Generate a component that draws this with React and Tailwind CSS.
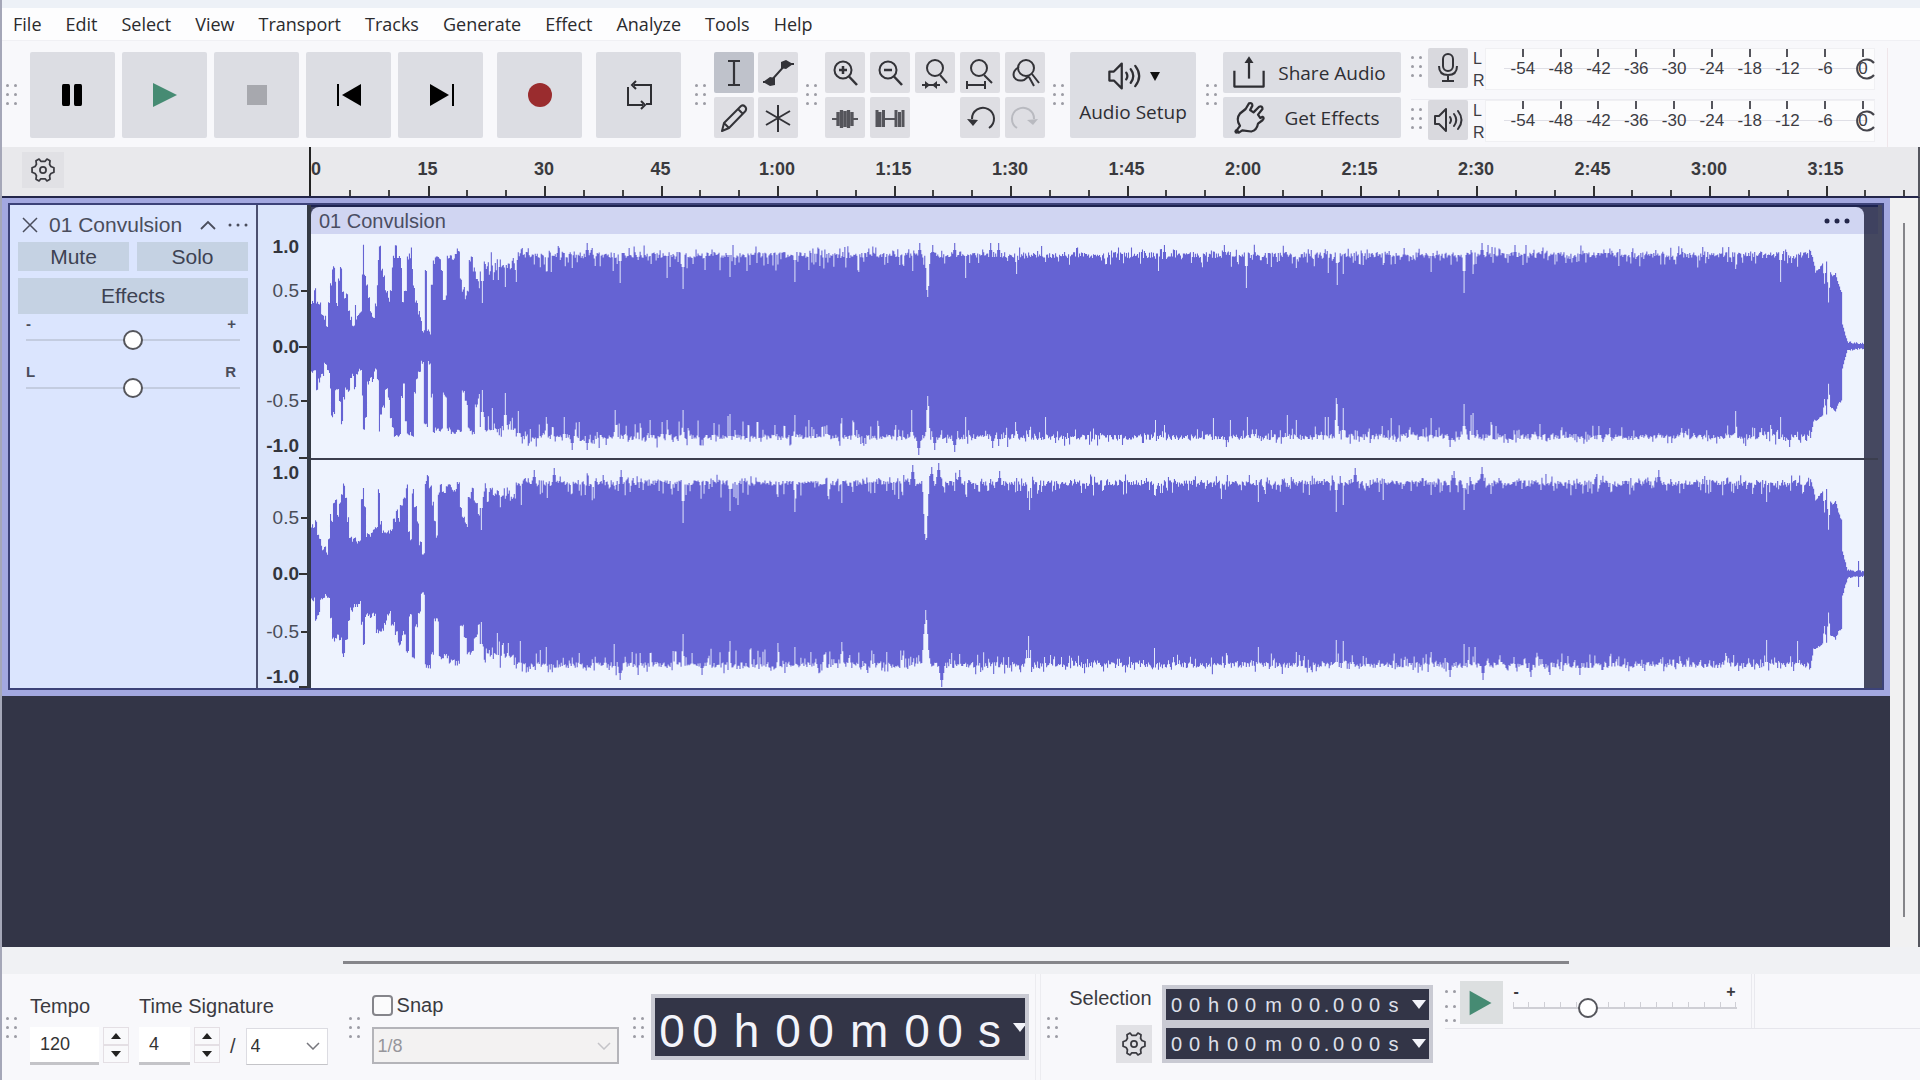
import { Fragment } from 'react';
import clsx from 'clsx';

const MENUS = ['File', 'Edit', 'Select', 'View', 'Transport', 'Tracks', 'Generate', 'Effect', 'Analyze', 'Tools', 'Help'];
const RULER = ['0', '15', '30', '45', '1:00', '1:15', '1:30', '1:45', '2:00', '2:15', '2:30', '2:45', '3:00', '3:15'];
const METER = ['-54', '-48', '-42', '-36', '-30', '-24', '-18', '-12', '-6', '0'];

const CLIP_WIDTH = 1555;
const INTRO_END = 169;
const OUTRO_START = 1501;

// The intro is drawn point by point (three units per pixel), the body is a level with dips and peaks.
const CHANNELS = [
    {
        height: 224,
        zero: 470,
        introTop: '936,340 945,300 950,340 957,340 965,375 975,385 980,410 988,340 992,285 1000,235 1005,270 1010,345 1018,270 1022,235 1028,310 1033,330 1038,310 1045,360 1052,385 1060,405 1065,345 1070,385 1078,370 1083,365 1086,260 1090,170 1094,260 1100,290 1108,320 1112,365 1120,380 1125,350 1132,290 1135,215 1139,170 1144,240 1150,260 1158,310 1165,330 1172,310 1175,240 1180,200 1185,170 1192,200 1198,200 1203,230 1208,340 1215,300 1222,205 1228,200 1233,180 1236,240 1242,290 1248,340 1255,370 1262,390 1270,430 1275,240 1279,240 1281,420 1288,430 1293,290 1300,220 1308,205 1318,205 1326,240 1330,325 1337,325 1343,205 1350,200 1358,210 1365,200 1375,185 1380,270 1390,300 1397,325 1403,300 1407,210 1415,205 1422,240 1430,270 1440,290',
        introBottom: '936,550 945,550 950,600 955,575 965,560 975,520 982,540 987,550 990,600 995,680 1002,670 1005,600 1012,600 1018,640 1023,700 1030,630 1035,600 1045,600 1052,560 1058,560 1063,600 1068,560 1075,540 1083,540 1086,620 1090,720 1098,690 1103,580 1110,570 1118,575 1125,545 1132,570 1137,725 1142,680 1150,650 1158,600 1165,630 1172,690 1178,710 1183,740 1198,740 1203,620 1212,590 1218,700 1222,735 1238,735 1243,610 1250,570 1258,550 1268,520 1275,710 1280,710 1284,510 1290,520 1295,620 1300,735 1310,720 1325,720 1332,610 1338,625 1342,720 1360,730 1380,725 1388,610 1398,640 1405,720 1420,730 1428,650 1440,620',
        dipsTop: [[171, 43], [182, 66], [194, 59], [205, 64], [240, 74], [309, 63], [356, 68], [372, 57], [419, 69], [436, 75], [484, 64], [498, 76], [548, 74], [602, 75], [616, 56], [617, 49], [618, 60], [655, 68], [706, 72], [848, 75], [936, 58], [961, 79], [986, 78], [1018, 73], [1027, 61], [1033, 72], [1073, 81], [1121, 74], [1154, 53], [1163, 72], [1426, 77], [1471, 64]],
        dipsBottom: [[171, 44], [181, 62], [194, 47], [207, 65], [235, 71], [253, 71], [268, 76], [304, 64], [339, 74], [356, 74], [372, 64], [417, 70], [419, 68], [484, 69], [498, 74], [531, 72], [601, 64], [616, 64], [617, 50], [618, 60], [655, 71], [705, 76], [735, 71], [845, 74], [903, 72], [920, 74], [937, 71], [977, 69], [986, 74], [1015, 71], [1018, 71], [1026, 52], [1027, 58], [1033, 62], [1081, 72], [1121, 72], [1154, 58], [1161, 69], [1163, 67], [1181, 76], [1426, 65], [1471, 71]],
        peaksTop: [[211, 98], [247, 100], [276, 103], [609, 103], [622, 101], [644, 103], [680, 103], [688, 103], [854, 101], [914, 101], [1172, 103], [1205, 101]],
        peaksBottom: [[261, 104], [276, 104], [295, 99], [608, 109], [624, 104], [644, 106], [682, 102], [688, 100], [916, 101], [1140, 101], [1480, 101]],
        tail: 0,
    },
    {
        height: 228,
        zero: 403,
        introTop: '936,260 943,260 947,240 952,280 960,300 965,325 975,315 981,345 987,300 990,225 995,250 1000,190 1006,175 1012,230 1018,185 1025,170 1030,135 1036,170 1042,240 1048,290 1060,300 1080,308 1084,180 1089,150 1093,200 1099,285 1115,285 1120,265 1130,260 1135,155 1140,250 1150,275 1175,275 1182,240 1190,215 1195,240 1205,200 1212,180 1222,140 1226,280 1233,295 1238,155 1245,200 1252,250 1258,310 1270,345 1276,130 1283,110 1290,140 1297,190 1303,240 1311,290 1317,160 1322,135 1330,155 1345,140 1360,150 1377,130 1380,200 1390,230 1400,255 1407,170 1418,150 1425,190 1440,230',
        introBottom: '936,480 943,480 947,540 955,520 965,475 985,470 990,540 1000,600 1010,590 1022,595 1030,645 1038,600 1045,540 1055,510 1068,500 1078,490 1083,550 1090,615 1096,525 1110,530 1120,525 1133,575 1145,570 1155,550 1165,520 1180,550 1190,580 1198,610 1210,580 1222,640 1230,530 1240,655 1248,560 1258,520 1266,460 1273,460 1277,680 1287,680 1297,640 1305,540 1312,540 1318,655 1335,650 1355,665 1375,670 1385,560 1395,590 1405,640 1415,640 1425,590 1440,550',
        dipsTop: [[170, 44], [176, 72], [183, 78], [210, 69], [236, 76], [274, 79], [372, 51], [419, 63], [427, 69], [467, 77], [484, 62], [531, 71], [564, 81], [613, 60], [614, 40], [615, 34], [616, 36], [617, 60], [656, 77], [717, 76], [719, 64], [721, 76], [771, 81], [844, 79], [911, 75], [948, 72], [1026, 62], [1033, 69], [1073, 74], [1121, 79], [1154, 64], [1158, 80], [1181, 80], [1424, 81], [1457, 72]],
        dipsBottom: [[170, 48], [178, 76], [186, 59], [191, 71], [209, 67], [235, 73], [268, 79], [303, 70], [339, 79], [372, 60], [419, 67], [467, 69], [484, 73], [531, 68], [612, 76], [613, 60], [614, 50], [615, 36], [616, 46], [617, 60], [618, 76], [698, 83], [716, 76], [718, 62], [720, 76], [844, 74], [948, 73], [986, 78], [1026, 66], [1033, 67], [1121, 78], [1154, 70], [1159, 73], [1165, 73], [1424, 81], [1457, 66], [1488, 67]],
        peaksTop: [[223, 104], [243, 106], [310, 104], [602, 109], [621, 107], [628, 111], [649, 104], [689, 103], [1045, 106], [1144, 103], [1172, 107], [1349, 104]],
        peaksBottom: [[309, 106], [391, 101], [631, 113], [1140, 103], [1173, 106], [1221, 103], [1270, 101]],
        tail: 13,
    },
];

const OUTRO_TOP = [[1501, 94], [1504, 84], [1506, 73], [1510, 77], [1513, 82], [1515, 61], [1517, 83], [1519, 43], [1521, 72], [1523, 68], [1526, 72], [1529, 60], [1532, 53], [1533, 21], [1536, 10], [1538, 3], [1556, 1]];
const OUTRO_BOTTOM = [[1501, 92], [1504, 74], [1508, 73], [1513, 68], [1515, 51], [1517, 67], [1519, 37], [1521, 60], [1526, 64], [1529, 57], [1532, 54], [1533, 21], [1536, 10], [1538, 3], [1556, 1]];

function levelAt(points, x, stepped) {
    const next = points.findIndex((p) => p[0] >= x);
    if (next <= 0) return points[next === 0 ? 0 : points.length - 1][1];
    const [x0, y0] = points[next - 1];
    const [x1, y1] = points[next];
    const t = (x - x0) / (x1 - x0);
    if (stepped) return t < 0.5 ? y0 : y1;
    return y0 + (y1 - y0) * t;
}

function envelope(introText, zero, dips, peaks, outro, tail, seed) {
    let state = seed;
    const random = () => {
        state = (state * 1664525 + 1013904223) % 4294967296;
        return state / 4294967296;
    };
    const intro = introText.split(' ').map((pair) => {
        const [x, y] = pair.split(',').map(Number);
        return [x / 3 - 311, Math.abs(y - zero) / 3];
    });
    const levels = [];
    for (let x = 0; x <= CLIP_WIDTH; x++) {
        if (x < INTRO_END) {
            levels.push(levelAt(intro, x, true) + (random() - 0.5) * 5);
        } else if (x >= OUTRO_START) {
            levels.push(Math.abs(x - 1549) < 1 ? Math.max(tail, 2) : levelAt(outro, x) + random() * 2);
        } else {
            const loose = x < 600 ? 1 : 0.7;
            let level = 91 + (random() - 0.5) * 6;
            const kind = random();
            const size = random();
            if (kind > 0.8) level -= size * 15 * loose;
            if (kind < 0.14) level += size * 8;
            if (x < 205) level -= 4 + random() * 10;
            peaks.forEach(([at, height]) => {
                level = Math.max(level, height - Math.abs(x - at) * 7);
            });
            dips.forEach(([at, depth]) => {
                level = Math.min(level, depth + Math.abs(x - at) * 22);
            });
            levels.push(level);
        }
    }
    return levels;
}

// Every pixel column is one flat step.
function wavePath(channel, index) {
    const mid = channel.height / 2;
    const top = envelope(channel.introTop, channel.zero, channel.dipsTop, channel.peaksTop, OUTRO_TOP, channel.tail, 17 + index);
    const bottom = envelope(channel.introBottom, channel.zero, channel.dipsBottom, channel.peaksBottom, OUTRO_BOTTOM, channel.tail, 91 + index);
    return top.map((level, x) => `M${x} ${(mid - level).toFixed(1)}h1.100V${(mid + bottom[x]).toFixed(1)}h-1.100z`).join('');
}

const WAVES = CHANNELS.map(wavePath);

function Icon({ size = 'size-8', children, className }) {
    return (
        <svg viewBox="0 0 32 32" className={clsx(size, className)} fill="none" stroke="currentColor" strokeWidth="2" aria-hidden="true">
            {children}
        </svg>
    );
}

const GearIcon = () => (
    <Icon size="size-7">
        <path d="M11.500 3.500l2 2.500h5l2-2.500 3.500 2-.500 4 1.500 2.500 3.500 1.500v5L25 20l-1.500 2.500.500 4-3.500 2-2-2.500h-5l-2 2.500-3.500-2 .500-4L7 20l-3.500-1.500v-5L7 12l1.500-2.500-.500-4z" strokeLinejoin="round" />
        <circle cx="16" cy="16" r="3.500" />
    </Icon>
);

const SpeakerIcon = ({ size }) => (
    <Icon size={size}>
        <path d="M3 12h4l7-7v22l-7-7H3z" strokeLinejoin="round" />
        <path d="M18 13q2 3 0 6M22 10q4.500 6 0 12M26 7q7 9 0 18" strokeLinecap="round" />
    </Icon>
);

const ZoomShape = ({ children }) => (
    <Icon>
        <circle cx="14" cy="13" r="8.500" />
        <path d="M20 19.500l8 8.500" strokeWidth="2.500" />
        {children}
    </Icon>
);

const TOOLS = [
    { name: 'Selection tool', active: true, icon: <Icon><path d="M10 4h12M10 28h12M16 4v24" strokeWidth="2.200" /></Icon> },
    { name: 'Envelope tool', icon: <Icon><path d="M1 25h7L24 7h8" /><path d="M1 25l7-5 5 1v7l-5 1zM31 7l-7-4-5 2v6l5 1z" fill="currentColor" stroke="none" /></Icon> },
    { name: 'Draw tool', icon: <Icon><path d="M4 29l2-8L23 4q2-1.500 4 .5t.5 4.500L11 26zM6 21l5 5M20 7l5 5" strokeLinejoin="round" /></Icon> },
    { name: 'Multi-tool', icon: <Icon><path d="M16 3v27M4 9l24 14M28 9L4 23" /></Icon> },
];

const EDIT = [
    { name: 'Zoom in', icon: <ZoomShape><path d="M10 13h8M14 9v8" strokeWidth="2.500" /></ZoomShape> },
    { name: 'Zoom out', icon: <ZoomShape><path d="M10 13h8" strokeWidth="2.500" /></ZoomShape> },
    { name: 'Fit selection', icon: <Icon><circle cx="16" cy="11" r="8" /><path d="M21 18l7 8M3 28h18" /><path d="M11 28l-5-4v8zM13 28l5-4v8z" fill="currentColor" stroke="none" /></Icon> },
    { name: 'Fit project', icon: <Icon><circle cx="15" cy="11" r="8" /><path d="M20 18l8 8M3 28h18M3 24v8M21 24v8" /></Icon> },
    { name: 'Zoom toggle', icon: <Icon><circle cx="17" cy="11" r="8" /><path d="M23 17l7 9M10 10q-7 4-5 10 3 5 10 3l5-4M20 20l5 9" /></Icon> },
    { name: 'Trim outside', icon: <Icon className="text-[#55555b]"><path d="M3 17h5M24 17h5" /><path d="M9 10v14M12.500 8v18M16 9v16M19.500 8v18M23 10v14" strokeWidth="3.300" /></Icon> },
    { name: 'Silence selection', icon: <Icon className="text-[#55555b]"><path d="M11 17h10" /><path d="M3 8v17M6 10v15M9.500 8v17M22 8v17M25.500 10v15M29 8v17" strokeWidth="3" /></Icon> },
    null,
    { name: 'Undo', icon: <Icon><path d="M6 18a11 11 0 1 1 17 9" transform="translate(2 -1)" /><path d="M3 17l6 7 5-6z" fill="currentColor" stroke="none" /></Icon> },
    { name: 'Redo', disabled: true, icon: <Icon><path d="M26 18A11 11 0 1 0 9 27" transform="translate(-1 -1)" /><path d="M29 17l-5 6-6-5z" fill="currentColor" stroke="none" /></Icon> },
];

const TRANSPORT = [
    { name: 'Pause', icon: <Icon><path d="M6.500 5h5q1.500 0 1.500 2v18q0 2-1.500 2h-5Q5 27 5 25V7q0-2 1.500-2zM18.500 5h5q1.500 0 1.500 2v18q0 2-1.500 2h-5Q17 27 17 25V7q0-2 1.500-2z" fill="#000" stroke="none" /></Icon> },
    { name: 'Play', icon: <Icon className="text-[#468b73]"><path d="M4 4l24 12L4 28z" fill="currentColor" stroke="none" /></Icon> },
    { name: 'Stop', disabled: true, icon: <Icon className="text-[#a7a8ae]"><path d="M6 6h20v20H6z" fill="currentColor" stroke="none" /></Icon> },
    { name: 'Skip to start', icon: <Icon><path d="M5 5v22" stroke="#000" /><path d="M28 5v22L9 16z" fill="#000" stroke="none" /></Icon> },
    { name: 'Skip to end', icon: <Icon><path d="M28 5v22" stroke="#000" /><path d="M5 5v22l19-11z" fill="#000" stroke="none" /></Icon> },
    { name: 'Record', gap: true, icon: <Icon><circle cx="16" cy="16" r="12" fill="#9a2c2e" stroke="none" /></Icon> },
    { name: 'Loop', gap: true, icon: <Icon><path d="M5 8v18h15M11 6h17v19h-5M13 2L9 6l4 4M18 22l4 4-4 4" /></Icon> },
];

function Grip({ className }) {
    return (
        <div className={clsx('grid w-[11px] shrink-0 grid-cols-2 gap-x-[5px] gap-y-1.5', className)}>
            {[0, 1, 2, 3, 4, 5].map((dot) => (
                <span key={dot} className="size-[3px] rounded-full bg-[#9c9ca4]" />
            ))}
        </div>
    );
}

function ToolButton({ name, icon, active, disabled }) {
    return (
        <button aria-label={name} disabled={disabled} className={clsx('flex h-[41px] w-10 items-center justify-center rounded-xs', active ? 'bg-[#bfc2cb]' : 'bg-[#dedee3]', disabled ? 'text-[#b9bac0]' : 'text-[#333338]')}>
            {icon}
        </button>
    );
}

function Meter({ name, icon }) {
    return (
        <div className="flex h-[52px] items-start border-b border-[#ececf1]">
            <Grip className="mt-2" />
            <button aria-label={name} className="ml-1.5 flex h-10 w-10 shrink-0 items-center justify-center rounded-xs bg-[#d9d9de] text-[#333338]">
                {icon}
            </button>
            <div className="ml-[5px] flex w-3 shrink-0 flex-col text-[16px] leading-[22px] text-[#3c3c44]">
                <span>L</span>
                <span>R</span>
            </div>
            <div className="h-[42px] min-w-0 flex-1 border border-[#f0f0f3] bg-[#fcfcfd] pl-[18px]">
                <div className="relative -mr-2 flex">
                    <span className="absolute top-[19px] right-4 left-0 h-px bg-[#dfdfe6]" />
                    {METER.map((label) => (
                        <span key={label} className="relative flex flex-1 flex-col items-center text-[17px] leading-6 text-[#3c3c44]">
                            <span className="h-2 w-0.5 bg-[#55555c]" />
                            {label}
                        </span>
                    ))}
                    <svg viewBox="0 0 24 24" className="absolute top-2 right-1 size-6" fill="none" stroke="#44444b" strokeWidth="2" aria-hidden="true">
                        <path d="M20 6a9.500 9.500 0 1 0 0 12" />
                    </svg>
                </div>
            </div>
        </div>
    );
}

function Toolbar() {
    return (
        <div className="flex h-[107px] items-start border-t border-[#f0f0f4] bg-[#f8f8fb] pt-[11px] pl-1">
            <Grip className="mt-8" />
            <div className="ml-[13px] flex gap-[7px]">
                {TRANSPORT.map((item) => (
                    <button key={item.name} aria-label={item.name} disabled={item.disabled} className={clsx('flex h-[86px] w-[85px] items-center justify-center rounded-xs bg-[#dcdde3] text-[#2e2e33]', item.gap && 'ml-[7px]')}>
                        {item.icon}
                    </button>
                ))}
            </div>
            <Grip className="mt-8 ml-3.5" />
            <div className="ml-2 grid grid-cols-2 gap-1">
                {TOOLS.map((tool) => <ToolButton key={tool.name} {...tool} />)}
            </div>
            <Grip className="mt-8 ml-2" />
            <div className="ml-2 grid grid-cols-5 gap-x-[5px] gap-y-1">
                {EDIT.map((tool, i) => (tool ? <ToolButton key={tool.name} {...tool} /> : <span key={i} />))}
            </div>
            <Grip className="mt-8 ml-2" />
            <button className="ml-1.5 flex h-[86px] w-[126px] shrink-0 flex-col items-center rounded-xs bg-[#dcdde3] pt-1.5 font-[Open_Sans,sans-serif] text-[19px] leading-6 text-[#2e2e33]">
                <span className="mb-1.5 flex items-center gap-2">
                    <SpeakerIcon size="size-9" />
                    <svg viewBox="0 0 10 10" className="size-2.5" aria-hidden="true"><path d="M0 1h10L5 10z" fill="#111" /></svg>
                </span>
                Audio Setup
            </button>
            <Grip className="mt-8 ml-2.5" />
            <div className="ml-1.5 flex w-[178px] shrink-0 flex-col gap-1 font-[Open_Sans,sans-serif] text-[19px] leading-6 text-[#2e2e33]">
                <button className="flex h-[41px] items-center rounded-xs bg-[#dcdde3] pr-1 pl-2">
                    <Icon size="size-9"><path d="M3 14v14h26V14" strokeLinejoin="round" /><path d="M16 21V6" /><path d="M16 1l-4 6h8z" fill="currentColor" stroke="none" /></Icon>
                    <span className="flex-1 text-center">Share Audio</span>
                </button>
                <button className="flex h-[41px] items-center rounded-xs bg-[#dcdde3] pr-1 pl-2">
                    <Icon size="size-9"><path d="M5 27l3-4q-4-6 0-11l5-4 3-5q3-1 3 2l-2 4 3 2 5-5q3-1 3 2l-4 5 2 3 2-1q2 1 0 3l-4 3q-1 6-6 7l-8-1-3 2z" strokeLinejoin="round" /><circle cx="5" cy="28" r="2" fill="currentColor" stroke="none" /></Icon>
                    <span className="flex-1 text-center">Get Effects</span>
                </button>
            </div>
            <div className="-mt-1 ml-2.5 flex min-w-0 flex-1 flex-col">
                <div className="mr-8 border-r border-[#efe6ea] pr-3">
                    <Meter name="Record meter" icon={<Icon><rect x="11" y="2" width="10" height="17" rx="5" /><path d="M7 14q0 9 9 9t9-9M16 23v6M10 29h12" /></Icon>} />
                    <Meter name="Playback meter" icon={<SpeakerIcon size="size-8" />} />
                </div>
            </div>
        </div>
    );
}

function Timeline() {
    return (
        <div className="flex h-[51px] border-r-2 border-b-2 border-r-[#55565e] border-b-[#23264a] bg-[#e9e9ec]">
            <div className="w-[307px] shrink-0 pt-[5px] pl-5">
                <button aria-label="Timeline options" className="flex h-9 w-[42px] items-center justify-center bg-[#e1e1e5] text-[#3a3a40]">
                    <GearIcon />
                </button>
            </div>
            <div className="flex min-w-0 flex-1 overflow-hidden border-l-2 border-[#222]">
                {RULER.map((label, i) => (
                    <div key={label} className="flex w-[7.25%] shrink-0 flex-col justify-between pt-3">
                        <span className={clsx('w-max text-[18px] leading-5 font-bold text-[#3a3a3e]', i > 0 && '-translate-x-1/2')}>{label}</span>
                        <div className="flex h-2.5 items-end">
                            <span className={clsx('h-2.5 flex-1 border-[#333]', i > 0 && 'border-l-2')} />
                            <span className="h-1.5 flex-1 border-l-2 border-[#444]" />
                            <span className="h-1.5 flex-1 border-l-2 border-[#444]" />
                        </div>
                    </div>
                ))}
            </div>
        </div>
    );
}

const SLIDER = 'h-5 appearance-none bg-transparent [&::-webkit-slider-runnable-track]:h-0.5 [&::-webkit-slider-thumb]:-mt-[9px] [&::-webkit-slider-thumb]:size-5 [&::-webkit-slider-thumb]:appearance-none [&::-webkit-slider-thumb]:rounded-full [&::-webkit-slider-thumb]:border-2 [&::-webkit-slider-thumb]:border-[#55565c] [&::-webkit-slider-thumb]:bg-white';

function TrackSlider({ label, low, high }) {
    return (
        <label className="block px-2 text-[15px] leading-4 font-bold text-[#4a4d5c]">
            <span className="flex justify-between pr-1">
                <span>{low}</span>
                <span>{high}</span>
            </span>
            <input type="range" aria-label={label} defaultValue="50" className={clsx(SLIDER, '-mt-0.5 block w-full [&::-webkit-slider-runnable-track]:bg-[#c3cce0]')} />
        </label>
    );
}

function TrackPanel() {
    const button = 'bg-[#c5d2e3] text-[21px] text-[#3d4252]';
    return (
        <div className="w-[246px] shrink-0 bg-[#dbe5fe] px-2 pt-2">
            <div className="flex h-6 items-center text-[#4a4d5c]">
                <button aria-label="Close track" className="ml-1">
                    <svg viewBox="0 0 16 16" className="size-4" stroke="currentColor" strokeWidth="1.500" aria-hidden="true"><path d="M1 1l14 14M15 1L1 15" /></svg>
                </button>
                <span className="ml-[11px] flex-1 text-[21px] leading-6 whitespace-nowrap">01 Convulsion</span>
                <button aria-label="Collapse track">
                    <svg viewBox="0 0 16 16" className="size-4" fill="none" stroke="currentColor" strokeWidth="1.800" aria-hidden="true"><path d="M1 12l7-7 7 7" /></svg>
                </button>
                <button aria-label="Track menu" className="ml-3">
                    <svg viewBox="0 0 20 4" className="h-1 w-5" fill="currentColor" aria-hidden="true"><circle cx="2" cy="2" r="1.500" /><circle cx="10" cy="2" r="1.500" /><circle cx="18" cy="2" r="1.500" /></svg>
                </button>
            </div>
            <div className="mt-[5px] grid grid-cols-2 gap-2">
                <button className={clsx(button, 'h-[29px] leading-7')}>Mute</button>
                <button className={clsx(button, 'h-[29px] leading-7')}>Solo</button>
            </div>
            <button className={clsx(button, 'mt-[7px] h-9 w-full')}>Effects</button>
            <div className="mt-0.5 flex flex-col gap-3.5">
                <TrackSlider label="Volume" low="-" high="+" />
                <TrackSlider label="Pan" low="L" high="R" />
            </div>
        </div>
    );
}

const AXIS = [
    { label: '1.0', row: 'mt-5 h-11', bold: true },
    { label: '0.5', row: 'h-11', tick: 'ml-0.5 w-1.5' },
    { label: '0.0', row: 'h-[67px]', bold: true, tick: 'w-2' },
    { label: '-0.5', row: 'h-[42px]', tick: 'ml-0.5 w-1.5' },
    { label: '-1.0', row: 'h-[37px] pt-2.5', bold: true, tick: 'w-2 self-end' },
    { label: '1.0', row: 'h-7', bold: true },
    { label: '0.5', row: 'h-[62px]', tick: 'ml-0.5 w-1.5' },
    { label: '0.0', row: 'h-[50px]', bold: true, tick: 'w-2' },
    { label: '-0.5', row: 'h-[66px]', tick: 'ml-0.5 w-1.5' },
    { label: '-1.0', row: 'h-[23px]', bold: true, tick: 'w-2 self-end' },
];

function Axis() {
    return (
        <div className="w-[51px] shrink-0 border-l-2 border-[#4c5070] bg-[#dbe5fb] text-[19px] leading-5 text-[#4a4d58]">
            {AXIS.map(({ label, row, bold, tick }, i) => (
                <div key={i} className={clsx('flex items-center justify-end', row, bold && 'font-bold text-[#33353c]')}>
                    {label}
                    <span className={clsx('h-0.5', tick || 'w-2', tick && 'bg-[#333]')} />
                </div>
            ))}
        </div>
    );
}

function Clip() {
    return (
        <div className="flex min-w-0 flex-1 border-l-4 border-[#343a44] bg-[#454860] pr-1">
            <div className="min-w-0 flex-1 border-t-2 border-[#1d2350]">
                <div className="flex bg-[#3f4260] pr-3.5">
                    <div className="flex h-[27px] flex-1 items-center justify-between rounded-t-lg bg-[#d0d5f2] pr-3.5 pl-2 text-[20px] text-[#4a4d62]">
                        <span>01 Convulsion</span>
                        <button aria-label="Clip menu">
                            <svg viewBox="0 0 26 6" className="h-1.5 w-[26px]" fill="#23264a" aria-hidden="true"><circle cx="3" cy="3" r="2.500" /><circle cx="13" cy="3" r="2.500" /><circle cx="23" cy="3" r="2.500" /></svg>
                        </button>
                    </div>
                </div>
                {CHANNELS.map((channel, i) => (
                    <Fragment key={i}>
                        {i > 0 && <div className="h-0.5 bg-[#3b3e4e]" />}
                        <div className="pr-3.5">
                            <svg viewBox={`0 0 ${CLIP_WIDTH} ${channel.height}`} preserveAspectRatio="none" className={clsx('block w-full bg-[#eef3fe]', i === 0 ? 'h-[224px]' : 'h-[228px]')} aria-hidden="true">
                                <path d={WAVES[i]} fill="#6563d3" />
                            </svg>
                        </div>
                    </Fragment>
                ))}
            </div>
        </div>
    );
}

function TrackArea() {
    return (
        <main className="flex flex-1 border-r-2 border-[#55565e] bg-[#f1f1f2]">
            <div className="min-w-0 flex-1 bg-[#333547]">
                <section className="border-x-[6px] border-t-[5px] border-b-[6px] border-[#a3a8e0]">
                    <div className="flex border-2 border-[#3c4278]">
                        <TrackPanel />
                        <Axis />
                        <Clip />
                    </div>
                </section>
            </div>
            <div className="flex w-7 justify-center pt-[25px] pb-[30px]">
                <div className="w-0.5 bg-[#85858a]" />
            </div>
        </main>
    );
}

function Spinner({ label, value, width }) {
    return (
        <div className="flex">
            <input id={label} aria-label={label} defaultValue={value} className={clsx('h-[38px] border-b-[3px] border-[#c4c4c8] bg-white pl-2.5 text-[18px] text-[#333]', width)} />
            <div className="ml-1 flex w-[26px] flex-col">
                {['M0 6l5-6 5 6z', 'M0 0h10L5 6z'].map((arrow, i) => (
                    <button key={arrow} aria-label={`${label} ${i ? 'down' : 'up'}`} className="flex h-[18px] items-center justify-center border border-[#e4dfe4] bg-[#f9f9fb]">
                        <svg viewBox="0 0 10 6" className="h-1.5 w-2.5" aria-hidden="true"><path d={arrow} fill="#222" /></svg>
                    </button>
                ))}
            </div>
        </div>
    );
}

function Chevron({ className }) {
    return (
        <svg viewBox="0 0 14 8" className={clsx('pointer-events-none absolute top-1/2 right-2 -mt-1 h-2 w-3.5', className)} fill="none" stroke="currentColor" strokeWidth="1.500" aria-hidden="true">
            <path d="M1 1l6 6 6-6" />
        </svg>
    );
}

const Arrow = ({ className }) => (
    <svg viewBox="0 0 14 9" className={clsx('h-[9px] w-3.5 shrink-0', className)} aria-hidden="true"><path d="M0 0h14L7 9z" fill="#f3f4fa" /></svg>
);

const BIG_CELLS = { h: 'w-[50px]', m: 'w-[63px]', s: 'w-[46px]' };
const SMALL_CELLS = { h: 'w-5', m: 'w-7', s: 'w-5', '.': 'w-1.5' };

function BigTime() {
    return (
        <div className="flex h-[66px] w-[378px] shrink-0 border-4 border-[#c9cad3] bg-[#333547] pl-px text-[46px] text-[#f3f4fa]">
            <div className="flex items-center pt-2">
                {[...'00h00m00s'].map((char, i) => (
                    <span key={i} className={clsx('text-center', BIG_CELLS[char] || 'w-[33px]')}>{char}</span>
                ))}
            </div>
            <button aria-label="Time format" className="flex flex-1 items-center overflow-hidden"><Arrow /></button>
        </div>
    );
}

function SmallTime({ label }) {
    return (
        <div className="flex h-[31px] items-center bg-[#333547] pl-0.5 text-[20px] text-[#dfe0ea]">
            {[...'00h00m00.000s'].map((char, i) => (
                <span key={i} className={clsx('text-center', SMALL_CELLS[char] || 'w-[18px]')}>{char}</span>
            ))}
            <button aria-label={label} className="ml-2"><Arrow /></button>
        </div>
    );
}

function BottomBar() {
    return (
        <footer className="flex h-[106px] items-start bg-[#f8f8fb] pl-1 text-[20px] leading-6 text-[#3a3a40]">
            <Grip className="mt-[43px]" />
            <div className="mt-5 ml-[13px] w-[109px]">
                <label htmlFor="Tempo">Tempo</label>
                <div className="mt-[9px]"><Spinner label="Tempo" value="120" width="w-[69px]" /></div>
            </div>
            <div className="mt-5">
                <label htmlFor="Upper">Time Signature</label>
                <div className="mt-[9px] flex items-center">
                    <Spinner label="Upper" value="4" width="w-[51px]" />
                    <span className="mx-2.5">/</span>
                    <div className="relative">
                        <select aria-label="Lower" className="h-[37px] w-[82px] appearance-none border border-[#dcdce2] border-b-[#c4c4c8] bg-white pl-1 text-[18px] text-[#333]">
                            <option>4</option>
                        </select>
                        <Chevron className="text-[#77777d]" />
                    </div>
                </div>
            </div>
            <Grip className="mt-[43px] ml-[21px]" />
            <div className="mt-[19px] ml-3 w-[247px]">
                <label className="flex items-center gap-1">
                    <input type="checkbox" className="size-[21px] appearance-none rounded-[4px] border-2 border-[#85858b] bg-[#fbfbfc]" />
                    Snap
                </label>
                <div className="relative mt-2.5">
                    <select aria-label="Snap to" disabled className="block h-[37px] w-full appearance-none border-2 border-[#b4b4b9] bg-[#f3f2f2] pl-1 text-[18px] text-[#96969b] opacity-100">
                        <option>1/8</option>
                    </select>
                    <Chevron className="text-[#c4c4c8]" />
                </div>
            </div>
            <Grip className="mt-[43px] ml-3.5" />
            <div className="mt-5 ml-[7px]"><BigTime /></div>
            <div className="ml-1.5 h-full w-1.5 border-x border-[#ececf0]" />
            <Grip className="mt-[43px] ml-1.5" />
            <div className="mt-3 ml-2.5 flex w-[84px] flex-col items-end">
                <span>Selection</span>
                <button aria-label="Selection options" className="mt-[15px] flex h-[38px] w-9 items-center justify-center bg-[#e1e1e5]">
                    <GearIcon />
                </button>
            </div>
            <div className="mt-[11px] ml-2.5 flex w-[271px] flex-col gap-2 border-4 border-[#c9cad3] bg-[#c9cad3]">
                <SmallTime label="Selection start format" />
                <SmallTime label="Selection end format" />
            </div>
            <div className="ml-3 flex h-[55px] min-w-0 flex-1 border-b border-[#e6e6ec]">
                <Grip className="mt-4" />
                <button aria-label="Play at speed" className="mt-[7px] ml-1 flex h-[43px] w-[43px] items-center justify-center bg-[#dcdfe0] text-[#468b73]">
                    <Icon size="size-7"><path d="M3 2l25 14L3 30z" fill="currentColor" stroke="none" /></Icon>
                </button>
                <label className="ml-2.5 w-[224px] pt-2.5 text-[16px] leading-4 font-bold">
                    <span className="flex justify-between px-px">
                        <span>-</span>
                        <span>+</span>
                    </span>
                    <span className="relative block">
                        <span className="absolute inset-x-0 top-1 flex h-1.5 justify-between">
                            {[...Array(15).keys()].map((tick) => <span key={tick} className="w-px bg-[#cfcfd5]" />)}
                        </span>
                        <input type="range" aria-label="Playback speed" defaultValue="32" className={clsx(SLIDER, 'relative -mt-0.5 block w-full [&::-webkit-slider-runnable-track]:bg-[#cfcfd5]')} />
                    </span>
                </label>
                <div className="ml-3.5 w-1 border-x border-[#e9e9ee]" />
            </div>
        </footer>
    );
}

export default function App() {
    return (
        <div className="flex min-h-screen flex-col overflow-hidden border-l-2 border-[#a5a7b8] bg-white font-[Liberation_Sans,Arial,sans-serif]">
            <div className="h-2 bg-[#edf1f7]" />
            <nav className="flex h-8 items-center gap-6 bg-[#fdfdfe] pl-[11px] font-[Open_Sans,sans-serif] text-[18px] text-[#2b2b2e]">
                {MENUS.map((menu) => <button key={menu}>{menu}</button>)}
            </nav>
            <Toolbar />
            <Timeline />
            <TrackArea />
            <div className="h-[27px] bg-[#f0f1f4] pt-3.5">
                <div className="mr-[18.300%] ml-[17.800%] h-[3px] bg-[#85858a]" />
            </div>
            <BottomBar />
        </div>
    );
}
